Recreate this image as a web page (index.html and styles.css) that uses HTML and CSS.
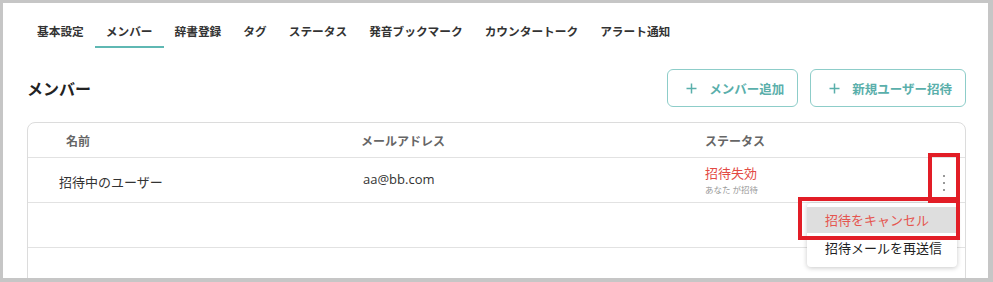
FILE: index.html
```html
<!DOCTYPE html>
<html lang="ja">
<head>
<meta charset="utf-8">
<title>メンバー</title>
<link rel="stylesheet" href="styles.css">
</head>
<body>
<div class="frame">
  <nav class="tabs">
    <a class="tab">基本設定</a>
    <a class="tab active">メンバー</a>
    <a class="tab">辞書登録</a>
    <a class="tab">タグ</a>
    <a class="tab">ステータス</a>
    <a class="tab">発音ブックマーク</a>
    <a class="tab">カウンタートーク</a>
    <a class="tab">アラート通知</a>
  </nav>

  <div class="head">
    <h2 class="title">メンバー</h2>
    <div class="actions">
      <button class="btn"><svg class="plus" width="11" height="11" viewBox="0 0 11 11"><path d="M5.5 0.5v10M0.5 5.5h10" stroke="currentColor" stroke-width="1.5" fill="none"/></svg><span>メンバー追加</span></button>
      <button class="btn"><svg class="plus" width="11" height="11" viewBox="0 0 11 11"><path d="M5.5 0.5v10M0.5 5.5h10" stroke="currentColor" stroke-width="1.5" fill="none"/></svg><span>新規ユーザー招待</span></button>
    </div>
  </div>

  <div class="card">
    <div class="row header">
      <div class="cell c-name">名前</div>
      <div class="cell c-mail">メールアドレス</div>
      <div class="cell c-status">ステータス</div>
    </div>
    <div class="row body">
      <div class="cell c-name">招待中のユーザー</div>
      <div class="cell c-mail"><span class="mail">aa@bb.com</span></div>
      <div class="cell c-status">
        <div class="status">
          <div class="st-label">招待失効</div>
          <div class="st-sub">あなた が招待</div>
        </div>
        <div class="kebab"><span></span><span></span><span></span></div>
      </div>
    </div>
    <div class="row body empty"></div>
    <div class="row body empty"></div>
  </div>

  <div class="menu">
    <div class="menu-item danger">招待をキャンセル</div>
    <div class="menu-item">招待メールを再送信</div>
  </div>

  <div class="mark mark-kebab"></div>
  <div class="mark mark-item"></div>
</div>
</body>
</html>
```

FILE: styles.css
```css
html, body {
  margin: 0;
  padding: 0;
}
body {
  background: #c6c6c6;
  font-family: "Open Sans", "Noto Sans CJK JP", sans-serif;
  color: #333;
}
.frame {
  position: relative;
  margin: 3px 5px 0 3px;
  height: 275px;
  background: #fff;
  overflow: hidden;
  box-sizing: border-box;
  padding: 13px 22px 0 24px;
}

/* tabs */
.tabs {
  display: flex;
  margin-left: -1px;
}
.tab {
  display: block;
  padding: 6px 11px 6px;
  font-family: "Noto Sans CJK JP", sans-serif;
  font-size: 11.7px;
  line-height: 18px;
  font-weight: 600;
  color: #333;
  border-bottom: 2px solid transparent;
}
.tab.active {
  border-bottom-color: #5fb8b3;
}

/* head */
.head {
  display: flex;
  justify-content: space-between;
  align-items: center;
  margin-top: 21px;
  height: 38px;
}
.title {
  margin: 0;
  font-family: "Noto Sans CJK JP", sans-serif;
  font-size: 16px;
  font-weight: 700;
  color: #222;
}
.actions {
  display: flex;
  gap: 12px;
}
.btn {
  display: inline-flex;
  align-items: center;
  gap: 12px;
  height: 38px;
  padding: 0 13px 0 18px;
  background: #fff;
  border: 1px solid #8dcdc9;
  border-radius: 6px;
  color: #5aafab;
  font-family: "Noto Sans CJK JP", sans-serif;
  font-size: 12.5px;
  font-weight: 600;
}
.plus {
  display: block;
}

/* card */
.card {
  margin-top: 15px;
  border: 1px solid #dcdcdc;
  border-radius: 8px;
  height: 200px;
}
.row {
  display: grid;
  grid-template-columns: 333px 344px 1fr;
  border-bottom: 1px solid #e2e2e2;
}
.row.header {
  height: 34px;
}
.row.body {
  height: 44px;
}
.row.empty + .row.empty {
  height: 43px;
}
.cell {
  display: flex;
  align-items: center;
  font-size: 13px;
}
.header .cell {
  font-family: "Noto Sans CJK JP", sans-serif;
  font-size: 12px;
  font-weight: 600;
  color: #666;
}
.header .c-name {
  padding-left: 38px;
}
.body .c-name {
  padding-left: 31px;
  padding-top: 3px;
  font-family: "Noto Sans CJK JP", sans-serif;
  color: #333;
}
.body .c-mail {
  padding-left: 2px;
  padding-bottom: 3px;
}
.mail {
  font-family: "Open Sans", sans-serif;
  font-size: 13px;
  color: #333;
}
.body .c-status {
  justify-content: space-between;
  padding-right: 11px;
}
.status {
  display: flex;
  flex-direction: column;
  gap: 2px;
  font-family: "Noto Sans CJK JP", sans-serif;
  padding-bottom: 1px;
}
.st-label {
  font-size: 13px;
  line-height: 17px;
  color: #e34a43;
}
.st-sub {
  font-size: 8.5px;
  line-height: 12px;
  color: #999;
}
.kebab {
  width: 20px;
  display: flex;
  flex-direction: column;
  align-items: center;
  gap: 5px;
  padding-top: 6px;
}
.kebab span {
  width: 2px;
  height: 2px;
  border-radius: 50%;
  background: #777;
}

/* dropdown menu */
.menu {
  position: absolute;
  left: 804px;
  top: 200px;
  width: 150px;
  padding: 4px 0 6px;
  background: #fff;
  border-radius: 4px;
  box-shadow: 0 1px 5px rgba(0, 0, 0, 0.22);
  font-family: "Noto Sans CJK JP", sans-serif;
  font-size: 13px;
}
.menu-item {
  height: 27px;
  line-height: 27px;
  padding-left: 18px;
  color: #222;
}
.menu-item.danger {
  height: 26px;
  line-height: 26px;
  background: #dedede;
  color: #e5554f;
  margin-bottom: 1px;
}

/* annotation boxes */
.mark {
  position: absolute;
  box-sizing: border-box;
  border: 4px solid #e21d26;
}
.mark-kebab {
  left: 925px;
  top: 150px;
  width: 32px;
  height: 50px;
}
.mark-item {
  left: 795px;
  top: 194px;
  width: 162px;
  height: 43px;
}
```
